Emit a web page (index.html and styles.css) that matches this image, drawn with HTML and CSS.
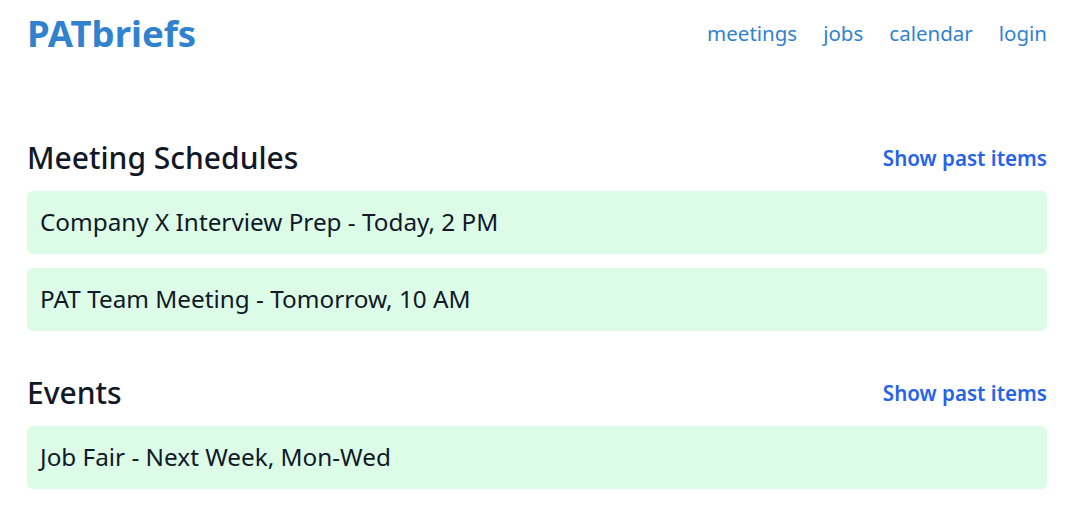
FILE: index.html
```html
<!DOCTYPE html>
<html lang="en">
<head>
<meta charset="utf-8">
<title>PATbriefs</title>
<link rel="stylesheet" href="styles.css">
</head>
<body>
<header class="topbar">
  <a class="logo" href="#">PATbriefs</a>
  <nav class="nav">
    <a href="#">meetings</a>
    <a href="#">jobs</a>
    <a href="#">calendar</a>
    <a href="#">login</a>
  </nav>
</header>
<main class="content">
  <section class="section">
    <div class="section-head">
      <h2>Meeting Schedules</h2>
      <a class="past" href="#">Show past items</a>
    </div>
    <ul class="items">
      <li class="item">Company X Interview Prep - Today, 2 PM</li>
      <li class="item">PAT Team Meeting - Tomorrow, 10 AM</li>
    </ul>
  </section>
  <section class="section">
    <div class="section-head">
      <h2>Events</h2>
      <a class="past" href="#">Show past items</a>
    </div>
    <ul class="items">
      <li class="item">Job Fair - Next Week, Mon-Wed</li>
    </ul>
  </section>
</main>
</body>
</html>
```
FILE: styles.css
```css
* { box-sizing: border-box; }
body {
  margin: 0;
  padding: 0 30px 0 27px;
  font-family: "Noto Sans", "Open Sans", sans-serif;
  color: #111827;
  background: #fff;
}
a { text-decoration: none; }
.topbar {
  display: flex;
  justify-content: space-between;
  align-items: center;
  padding-top: 10px;
}
.logo {
  font-size: 36.5px;
  line-height: 46px;
  font-weight: 700;
  color: #3182ce;
}
.nav {
  display: flex;
  gap: 26px;
}
.nav a {
  font-size: 20.5px;
  color: #3182ce;
}
.content {
  padding-top: 84px;
}
.section { margin-bottom: 44px; }
.section-head {
  display: flex;
  justify-content: space-between;
  align-items: center;
  margin-bottom: 15px;
}
.section-head h2 {
  margin: 0;
  font-size: 30px;
  line-height: 36px;
  font-weight: 500;
}
.past {
  font-size: 20.6px;
  font-weight: 600;
  color: #2563eb;
}
.items {
  list-style: none;
  margin: 0;
  padding: 0;
  display: flex;
  flex-direction: column;
  gap: 14px;
}
.item {
  background: #dcfce7;
  border-radius: 6px;
  padding: 15px 13px 16px;
  font-size: 24.3px;
  line-height: 32px;
}
```
